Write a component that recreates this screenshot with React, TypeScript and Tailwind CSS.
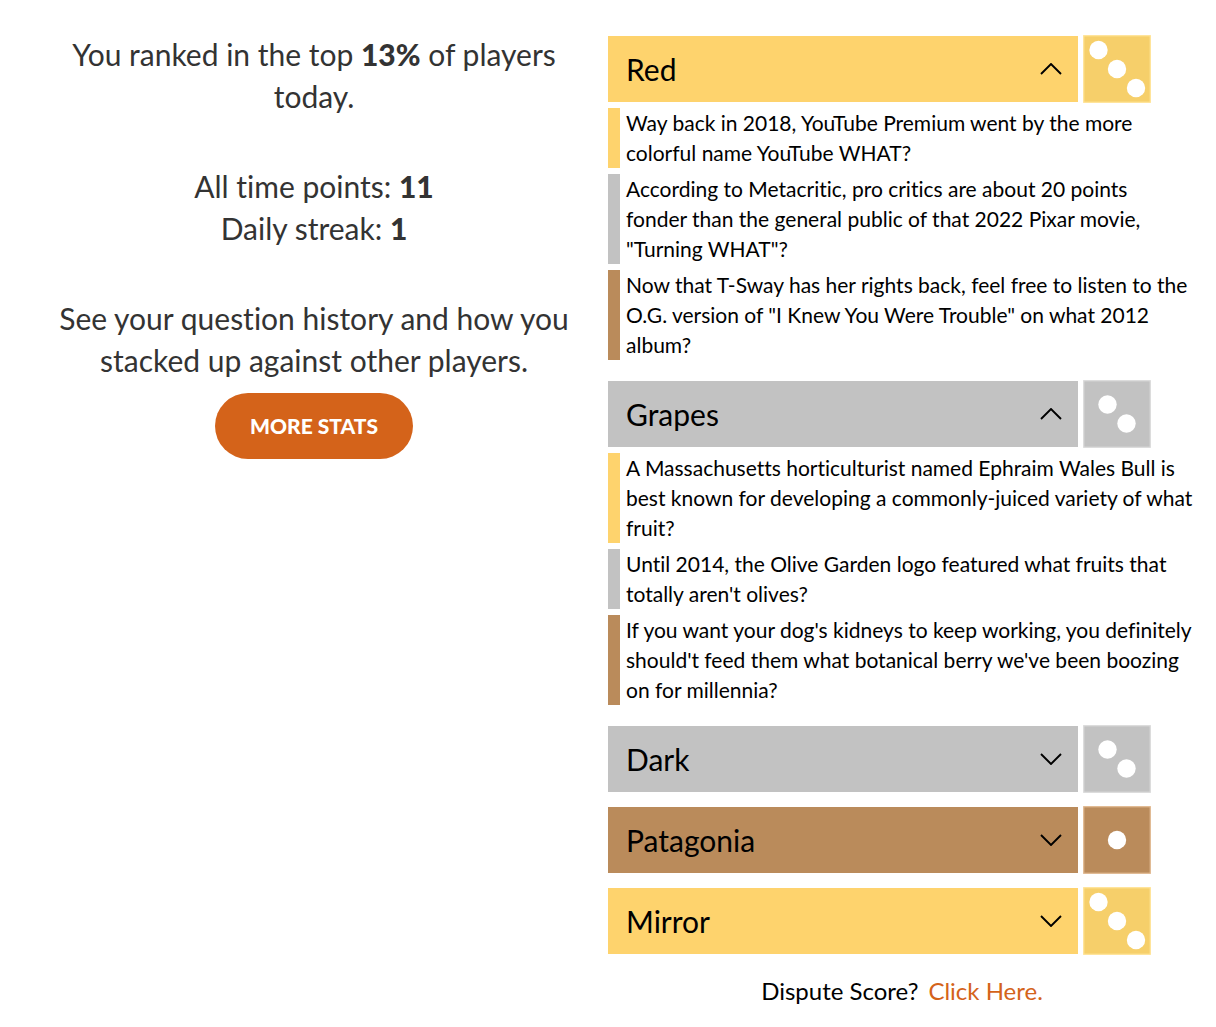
import React, { useState } from "react";

type Tone = "gold" | "silver" | "bronze";

const bar: Record<Tone, string> = {
  gold: "bg-[#fed36d]",
  silver: "bg-[#c2c2c2]",
  bronze: "bg-[#ba8b5b]",
};

const dieFill: Record<Tone, string> = {
  gold: "#f6cf6a",
  silver: "#c2c2c2",
  bronze: "#ba8b5b",
};

const dieEdge: Record<Tone, string> = {
  gold: "#ffe394",
  silver: "#dadada",
  bronze: "#dfb78e",
};

const pips: Record<Tone, [number, number][]> = {
  gold: [[15.5, 15], [34, 34], [53, 53]],
  silver: [[24.5, 24.5], [43.5, 43.5]],
  bronze: [[34, 34]],
};

const clueTones: Tone[] = ["gold", "silver", "bronze"];

function Die({ tone }: { tone: Tone }) {
  return (
    <svg width="68" height="68" viewBox="0 0 68 68" className="-my-px shrink-0" aria-hidden="true">
      <rect x="0.75" y="0.75" width="66.5" height="66.5" fill={dieFill[tone]} stroke={dieEdge[tone]} strokeWidth="1.3" />
      {pips[tone].map(([x, y]) => (
        <circle key={x} cx={x} cy={y} r="9.2" fill="#fff" />
      ))}
    </svg>
  );
}

function Question({ answer, tone, clues, initiallyOpen }: { answer: string; tone: Tone; clues: string[]; initiallyOpen: boolean }) {
  const [open, setOpen] = useState(initiallyOpen);
  return (
    <section>
      <div className="flex gap-[5px]">
        <button
          type="button"
          aria-expanded={open}
          onClick={() => setOpen(!open)}
          className={`flex h-[66px] w-4/5 items-center justify-between pr-4 pl-[18px] text-left text-[30px] leading-[42px] ${bar[tone]}`}
        >
          <span>{answer}</span>
          <svg width="22" height="12" viewBox="0 0 22 12" fill="none" stroke="#000" strokeWidth="1.9" aria-hidden="true">
            <path d={open ? "M1 11 11 1l10 10" : "M1 1l10 10L21 1"} />
          </svg>
        </button>
        <Die tone={tone} />
      </div>
      {open && clues.length > 0 && (
        <ul className="mt-1.5 flex flex-col gap-1.5 pr-[3px] pb-1.5">
          {clues.map((clue, i) => (
            <li key={clue} className="flex gap-1.5 text-[21px] leading-[30px]">
              <span className={`w-3 shrink-0 ${bar[clueTones[i]]}`} />
              <p>{clue}</p>
            </li>
          ))}
        </ul>
      )}
    </section>
  );
}

const questions: { answer: string; tone: Tone; clues: string[] }[] = [
  {
    answer: "Red",
    tone: "gold",
    clues: [
      "Way back in 2018, YouTube Premium went by the more colorful name YouTube WHAT?",
      "According to Metacritic, pro critics are about 20 points fonder than the general public of that 2022 Pixar movie, \"Turning WHAT\"?",
      "Now that T-Sway has her rights back, feel free to listen to the O.G. version of \"I Knew You Were Trouble\" on what 2012 album?",
    ],
  },
  {
    answer: "Grapes",
    tone: "silver",
    clues: [
      "A Massachusetts horticulturist named Ephraim Wales Bull is best known for developing a commonly-juiced variety of what fruit?",
      "Until 2014, the Olive Garden logo featured what fruits that totally aren't olives?",
      "If you want your dog's kidneys to keep working, you definitely should't feed them what botanical berry we've been boozing on for millennia?",
    ],
  },
  { answer: "Dark", tone: "silver", clues: [] },
  { answer: "Patagonia", tone: "bronze", clues: [] },
  { answer: "Mirror", tone: "gold", clues: [] },
];

export default function App() {
  return (
    <main className="grid grid-cols-2 bg-white px-5 pt-[33px] font-['Lato',sans-serif] text-black [font-variant-ligatures:none]">
      <section className="px-6 text-center text-[30px] leading-[42px] text-[#333333]">
        <p>
          You ranked in the top <strong className="font-black">13%</strong> of players today.
        </p>
        <p className="mt-12">
          All time points: <strong className="font-black">11</strong>
          <br />
          Daily streak: <strong className="font-black">1</strong>
        </p>
        <p className="mt-12">See your question history and how you stacked up against other players.</p>
        <button type="button" className="mt-3 h-[66px] rounded-full bg-[#d4631a] px-[35px] text-[21px] leading-[30px] font-black text-white">
          MORE STATS
        </button>
      </section>
      <section className="pt-[3px]">
        <div className="flex flex-col gap-[15px]">
          {questions.map((q) => (
            <Question key={q.answer} {...q} initiallyOpen={q.clues.length > 0} />
          ))}
        </div>
        <p className="mt-[19px] flex justify-center gap-2.5 text-2xl leading-9">
          <span>Dispute Score?</span>
          <a href="#dispute" className="text-[#d4631a]">Click Here.</a>
        </p>
      </section>
    </main>
  );
}
